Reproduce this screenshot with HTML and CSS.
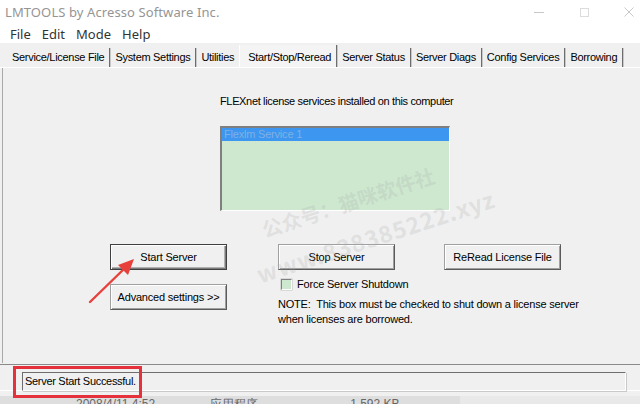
FILE: index.html
```html
<!DOCTYPE html>
<html>
<head>
<meta charset="utf-8">
<link rel="stylesheet" href="styles.css">
</head>
<body>
<div class="window">
  <div class="titlebar">
    <span class="title">LMTOOLS by Acresso Software Inc.</span>
    <div class="controls">
      <svg class="ctl" width="12" height="12" viewBox="0 0 12 12"><path d="M1 6.5H11" stroke="#c8c8c8" stroke-width="1"/></svg>
      <svg class="ctl" width="12" height="12" viewBox="0 0 12 12"><rect x="2.5" y="2.5" width="8" height="8" fill="none" stroke="#dcdcdc" stroke-width="1"/></svg>
      <svg class="ctl" width="12" height="12" viewBox="0 0 12 12"><path d="M1.5 1.5L10.5 10.5M10.5 1.5L1.5 10.5" stroke="#c8c8c8" stroke-width="1"/></svg>
    </div>
  </div>
  <div class="menubar">
    <span>File</span><span>Edit</span><span>Mode</span><span>Help</span>
  </div>
  <div class="tabs">
    <span class="tab">Service/License File</span>
    <span class="tab">System Settings</span>
    <span class="tab tab-before">Utilities</span>
    <span class="tab active">Start/Stop/Reread</span>
    <span class="tab">Server Status</span>
    <span class="tab">Server Diags</span>
    <span class="tab">Config Services</span>
    <span class="tab">Borrowing</span>
  </div>
  <div class="panel">
    <p class="caption">FLEXnet license services installed on this computer</p>
    <div class="listbox">
      <div class="item selected">Flexlm Service 1</div>
    </div>
    <div class="actions">
      <div class="col-left">
        <button class="btn default">Start Server</button>
        <button class="btn">Advanced settings &gt;&gt;</button>
      </div>
      <div class="col-right">
        <div class="btn-row">
          <button class="btn">Stop Server</button>
          <button class="btn">ReRead License File</button>
        </div>
        <label class="check"><span class="box"></span>Force Server Shutdown</label>
        <p class="note">NOTE:&nbsp; This box must be checked to shut down a license server<br>when licenses are borrowed.</p>
      </div>
    </div>
  </div>
  <div class="statusarea">
    <div class="status">Server Start Successful.</div>
  </div>
  <div class="behind">
    <span class="b1">2008/4/11 4:52</span><span class="b2">应用程序</span><span class="b3">1,592 KB</span>
  </div>

  <div class="watermark wm1">公众号：猫咪软件社</div>
  <div class="watermark wm2">www.838385222.xyz</div>
  <svg class="arrow" width="60" height="56" viewBox="0 0 60 56">
    <path d="M4 50L40 15" stroke="#e8403a" stroke-width="2.4" stroke-linecap="round"/>
    <path d="M48 7L32 13L42 23Z" fill="#e8403a"/>
  </svg>
  <div class="highlight"></div>
</div>
</body>
</html>
```
FILE: styles.css
```css
html, body {
  margin: 0;
  padding: 0;
}
body {
  width: 640px;
  height: 404px;
  overflow: hidden;
  background: #f0f0f0;
  font-family: "Liberation Sans", Arial, sans-serif;
  font-size: 11px;
  color: #000;
}
.window {
  position: relative;
  width: 640px;
  height: 404px;
  overflow: hidden;
}
.titlebar {
  height: 24px;
  background: #fff;
  display: flex;
  align-items: center;
  justify-content: space-between;
  padding-left: 5px;
}
.title {
  font-family: "Noto Sans", "Open Sans", sans-serif;
  font-size: 13px;
  color: #959595;
  letter-spacing: 0.1px;
}
.controls {
  display: flex;
  align-items: center;
  gap: 33px;
  padding-right: 5px;
}
.menubar {
  height: 19px;
  background: #fff;
  display: flex;
  align-items: center;
  gap: 11px;
  padding-left: 10px;
  font-family: "Noto Sans", "Open Sans", sans-serif;
  font-size: 13px;
  color: #333;
}
.tabs {
  height: 25px;
  display: flex;
  align-items: flex-end;
  padding-left: 7px;
  box-sizing: border-box;
  border-bottom: 1px solid #fff;
}
.tab {
  height: 19px;
  line-height: 19px;
  padding: 0 5px 0 5px;
  border-right: 1px solid #6d6d6d;
  box-shadow: 1px 0 0 #c8c8c8;
  letter-spacing: -0.3px;
  white-space: nowrap;
}
.tab-before {
  border-right: none;
  box-shadow: none;
}
.tab.active {
  padding: 3px 5px 0 8px;
  background: #f4f4f4;
  border-left: 1px solid #fff;
}
.panel {
  height: 295px;
  margin-left: 2px;
  border-left: 1px solid #a9a9a9;
  box-sizing: border-box;
  padding-left: 217px;
  padding-top: 26px;
  position: relative;
}
.caption {
  margin: 0;
  line-height: 14px;
  letter-spacing: -0.35px;
}
.listbox {
  margin-top: 18px;
  width: 230px;
  height: 85px;
  box-sizing: border-box;
  background: #cde8cf;
  border-top: 2px solid #7f7f7f;
  border-left: 2px solid #7f7f7f;
  border-right: 1px solid #fff;
  border-bottom: 1px solid #fff;
}
.item {
  height: 13px;
  line-height: 13px;
  padding-left: 2px;
  letter-spacing: -0.2px;
}
.item.selected {
  background: #3d96f0;
  color: #7fb1e4;
}
.actions {
  display: flex;
  margin-top: 33px;
  margin-left: -110px;
  gap: 51px;
}
.col-left {
  display: flex;
  flex-direction: column;
  gap: 14px;
}
.btn {
  width: 117px;
  height: 26px;
  box-sizing: border-box;
  background: #f0f0f0;
  font-family: "Liberation Sans", Arial, sans-serif;
  font-size: 11px;
  letter-spacing: -0.2px;
  color: #000;
  padding: 0;
  border: 1px solid #a0a0a0;
  border-right-color: #5a5a5a;
  border-bottom-color: #5a5a5a;
  box-shadow: inset 1px 1px 0 #fff, inset -1px -1px 0 #a0a0a0;
}
.btn.default {
  border: 1px solid #404040;
  box-shadow: inset 1px 1px 0 #fff, inset -1px -1px 0 #7a7a7a, inset -2px -2px 0 #b0b0b0;
}
.btn-row {
  display: flex;
  gap: 49px;
}
.check {
  display: flex;
  align-items: center;
  margin-top: 8px;
  margin-left: 3px;
  height: 12px;
  letter-spacing: -0.2px;
}
.box {
  width: 9px;
  height: 9px;
  background: #cde8cf;
  border-top: 1px solid #808080;
  border-left: 1px solid #808080;
  border-right: 1px solid #fff;
  border-bottom: 1px solid #fff;
  box-shadow: 0 0 0 0.5px #c0c0c0;
  margin-right: 5px;
}
.note {
  margin: 7px 0 0 0;
  line-height: 15px;
  letter-spacing: -0.2px;
  white-space: nowrap;
}
.statusarea {
  border-top: 1px solid #8a8a8a;
  box-shadow: 0 1px 0 #fff;
  margin-top: 1px;
  padding: 7px 14px 0 22px;
  height: 26px;
  box-sizing: border-box;
}
.status {
  height: 19px;
  box-sizing: border-box;
  border-top: 1px solid #6e6e6e;
  border-left: 1px solid #6e6e6e;
  border-right: 1px solid #fff;
  border-bottom: 1px solid #fff;
  box-shadow: 1px 1px 0 #c9c9c9;
  line-height: 17px;
  padding-left: 2px;
  letter-spacing: -0.3px;
  font-size: 11px;
}
.behind {
  height: 40px;
  margin-top: 6px;
  background: linear-gradient(to right, #dedede 0, #dedede 460px, #e9e9e9 460px);
  font-size: 12px;
  color: #666;
  display: flex;
  line-height: 12px;
  padding-top: 2px;
}
.b1 { margin-left: 76px; }
.b2 { margin-left: 55px; }
.b3 { margin-left: 92px; }
.watermark {
  position: absolute;
  font-family: "Noto Sans CJK SC", "Noto Sans", sans-serif;
  font-weight: bold;
  color: rgba(170, 170, 170, 0.24);
  transform-origin: 0 0;
  transform: rotate(-18deg);
  white-space: nowrap;
}
.wm1 {
  left: 258px;
  top: 216px;
  font-size: 20px;
}
.wm2 {
  left: 252px;
  top: 258px;
  font-size: 23px;
  letter-spacing: 1px;
}
.arrow {
  position: absolute;
  left: 86px;
  top: 252px;
}
.highlight {
  position: absolute;
  left: 13px;
  top: 366px;
  width: 129px;
  height: 32px;
  box-sizing: border-box;
  border: 3px solid #e5313b;
}
```
